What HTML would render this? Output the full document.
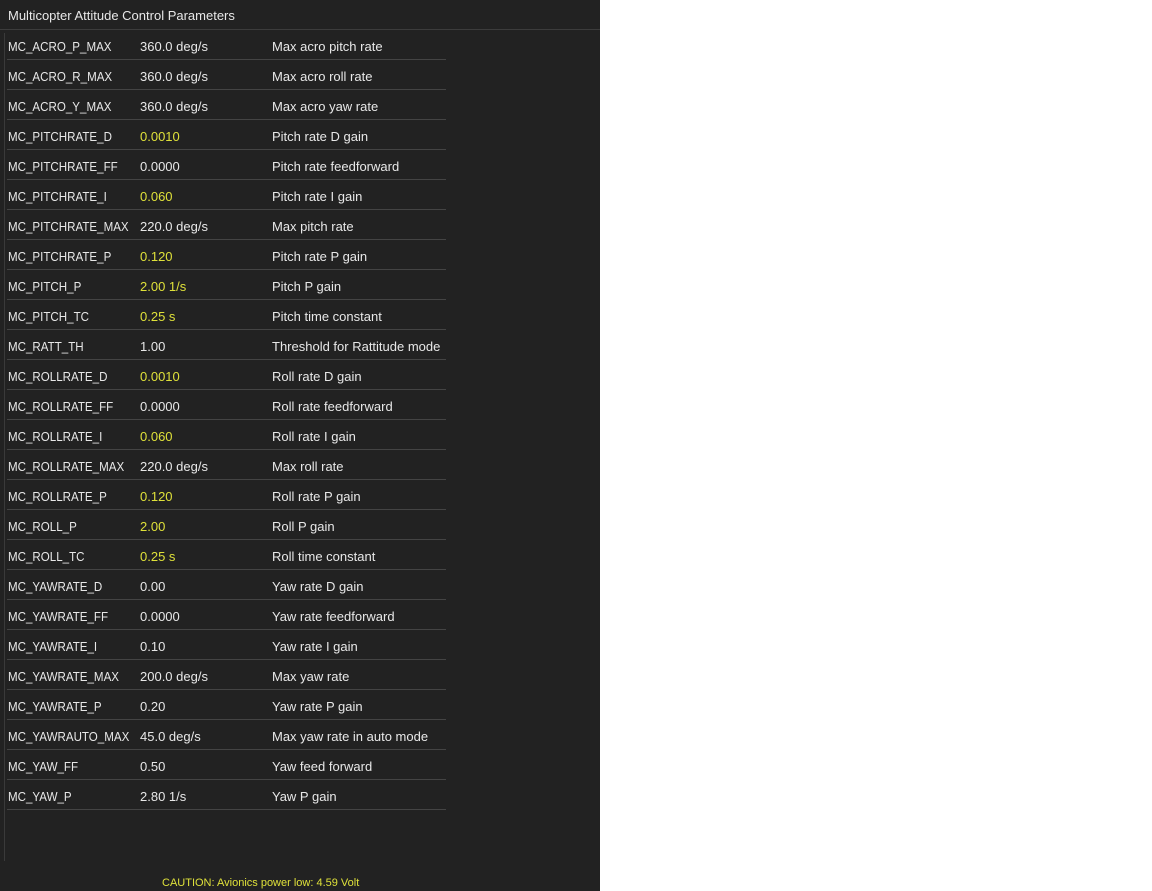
<!DOCTYPE html>
<html><head><meta charset="utf-8"><style>
html,body{margin:0;padding:0;background:#fff;}
#p{position:absolute;left:0;top:0;width:600px;height:891px;background:#222;font-family:"Liberation Sans",sans-serif;font-size:13px;color:#e8e8e8;overflow:hidden;}
#t{position:absolute;left:8px;top:8px;font-size:13px;}
#hl{position:absolute;left:0;top:29px;width:600px;height:1px;background:#3c3c3c;}
#vl{position:absolute;left:4px;top:33px;width:1px;height:828px;background:#3a3a3a;}
.r{position:absolute;left:7px;width:439px;height:30px;border-bottom:1px solid #444;box-sizing:border-box;}
.r span{position:absolute;top:9px;white-space:nowrap;}
.a{left:1px;transform:scaleX(0.89);transform-origin:0 0}.b{left:133px}.c{left:265px}
.y{color:#dfe13a}
#f{position:absolute;left:162px;top:877px;font-size:11px;color:#dfe13a;}
</style></head><body><div id="p">
<div id="t">Multicopter Attitude Control Parameters</div>
<div id="hl"></div><div id="vl"></div>
<div class="r" style="top:30px"><span class="a">MC_ACRO_P_MAX</span><span class="b">360.0 deg/s</span><span class="c">Max acro pitch rate</span></div>
<div class="r" style="top:60px"><span class="a">MC_ACRO_R_MAX</span><span class="b">360.0 deg/s</span><span class="c">Max acro roll rate</span></div>
<div class="r" style="top:90px"><span class="a">MC_ACRO_Y_MAX</span><span class="b">360.0 deg/s</span><span class="c">Max acro yaw rate</span></div>
<div class="r" style="top:120px"><span class="a">MC_PITCHRATE_D</span><span class="b y">0.0010</span><span class="c">Pitch rate D gain</span></div>
<div class="r" style="top:150px"><span class="a">MC_PITCHRATE_FF</span><span class="b">0.0000</span><span class="c">Pitch rate feedforward</span></div>
<div class="r" style="top:180px"><span class="a">MC_PITCHRATE_I</span><span class="b y">0.060</span><span class="c">Pitch rate I gain</span></div>
<div class="r" style="top:210px"><span class="a">MC_PITCHRATE_MAX</span><span class="b">220.0 deg/s</span><span class="c">Max pitch rate</span></div>
<div class="r" style="top:240px"><span class="a">MC_PITCHRATE_P</span><span class="b y">0.120</span><span class="c">Pitch rate P gain</span></div>
<div class="r" style="top:270px"><span class="a">MC_PITCH_P</span><span class="b y">2.00 1/s</span><span class="c">Pitch P gain</span></div>
<div class="r" style="top:300px"><span class="a">MC_PITCH_TC</span><span class="b y">0.25 s</span><span class="c">Pitch time constant</span></div>
<div class="r" style="top:330px"><span class="a">MC_RATT_TH</span><span class="b">1.00</span><span class="c">Threshold for Rattitude mode</span></div>
<div class="r" style="top:360px"><span class="a">MC_ROLLRATE_D</span><span class="b y">0.0010</span><span class="c">Roll rate D gain</span></div>
<div class="r" style="top:390px"><span class="a">MC_ROLLRATE_FF</span><span class="b">0.0000</span><span class="c">Roll rate feedforward</span></div>
<div class="r" style="top:420px"><span class="a">MC_ROLLRATE_I</span><span class="b y">0.060</span><span class="c">Roll rate I gain</span></div>
<div class="r" style="top:450px"><span class="a">MC_ROLLRATE_MAX</span><span class="b">220.0 deg/s</span><span class="c">Max roll rate</span></div>
<div class="r" style="top:480px"><span class="a">MC_ROLLRATE_P</span><span class="b y">0.120</span><span class="c">Roll rate P gain</span></div>
<div class="r" style="top:510px"><span class="a">MC_ROLL_P</span><span class="b y">2.00</span><span class="c">Roll P gain</span></div>
<div class="r" style="top:540px"><span class="a">MC_ROLL_TC</span><span class="b y">0.25 s</span><span class="c">Roll time constant</span></div>
<div class="r" style="top:570px"><span class="a">MC_YAWRATE_D</span><span class="b">0.00</span><span class="c">Yaw rate D gain</span></div>
<div class="r" style="top:600px"><span class="a">MC_YAWRATE_FF</span><span class="b">0.0000</span><span class="c">Yaw rate feedforward</span></div>
<div class="r" style="top:630px"><span class="a">MC_YAWRATE_I</span><span class="b">0.10</span><span class="c">Yaw rate I gain</span></div>
<div class="r" style="top:660px"><span class="a">MC_YAWRATE_MAX</span><span class="b">200.0 deg/s</span><span class="c">Max yaw rate</span></div>
<div class="r" style="top:690px"><span class="a">MC_YAWRATE_P</span><span class="b">0.20</span><span class="c">Yaw rate P gain</span></div>
<div class="r" style="top:720px"><span class="a">MC_YAWRAUTO_MAX</span><span class="b">45.0 deg/s</span><span class="c">Max yaw rate in auto mode</span></div>
<div class="r" style="top:750px"><span class="a">MC_YAW_FF</span><span class="b">0.50</span><span class="c">Yaw feed forward</span></div>
<div class="r" style="top:780px"><span class="a">MC_YAW_P</span><span class="b">2.80 1/s</span><span class="c">Yaw P gain</span></div>
<div id="f">CAUTION: Avionics power low: 4.59 Volt</div>
</div></body></html>
